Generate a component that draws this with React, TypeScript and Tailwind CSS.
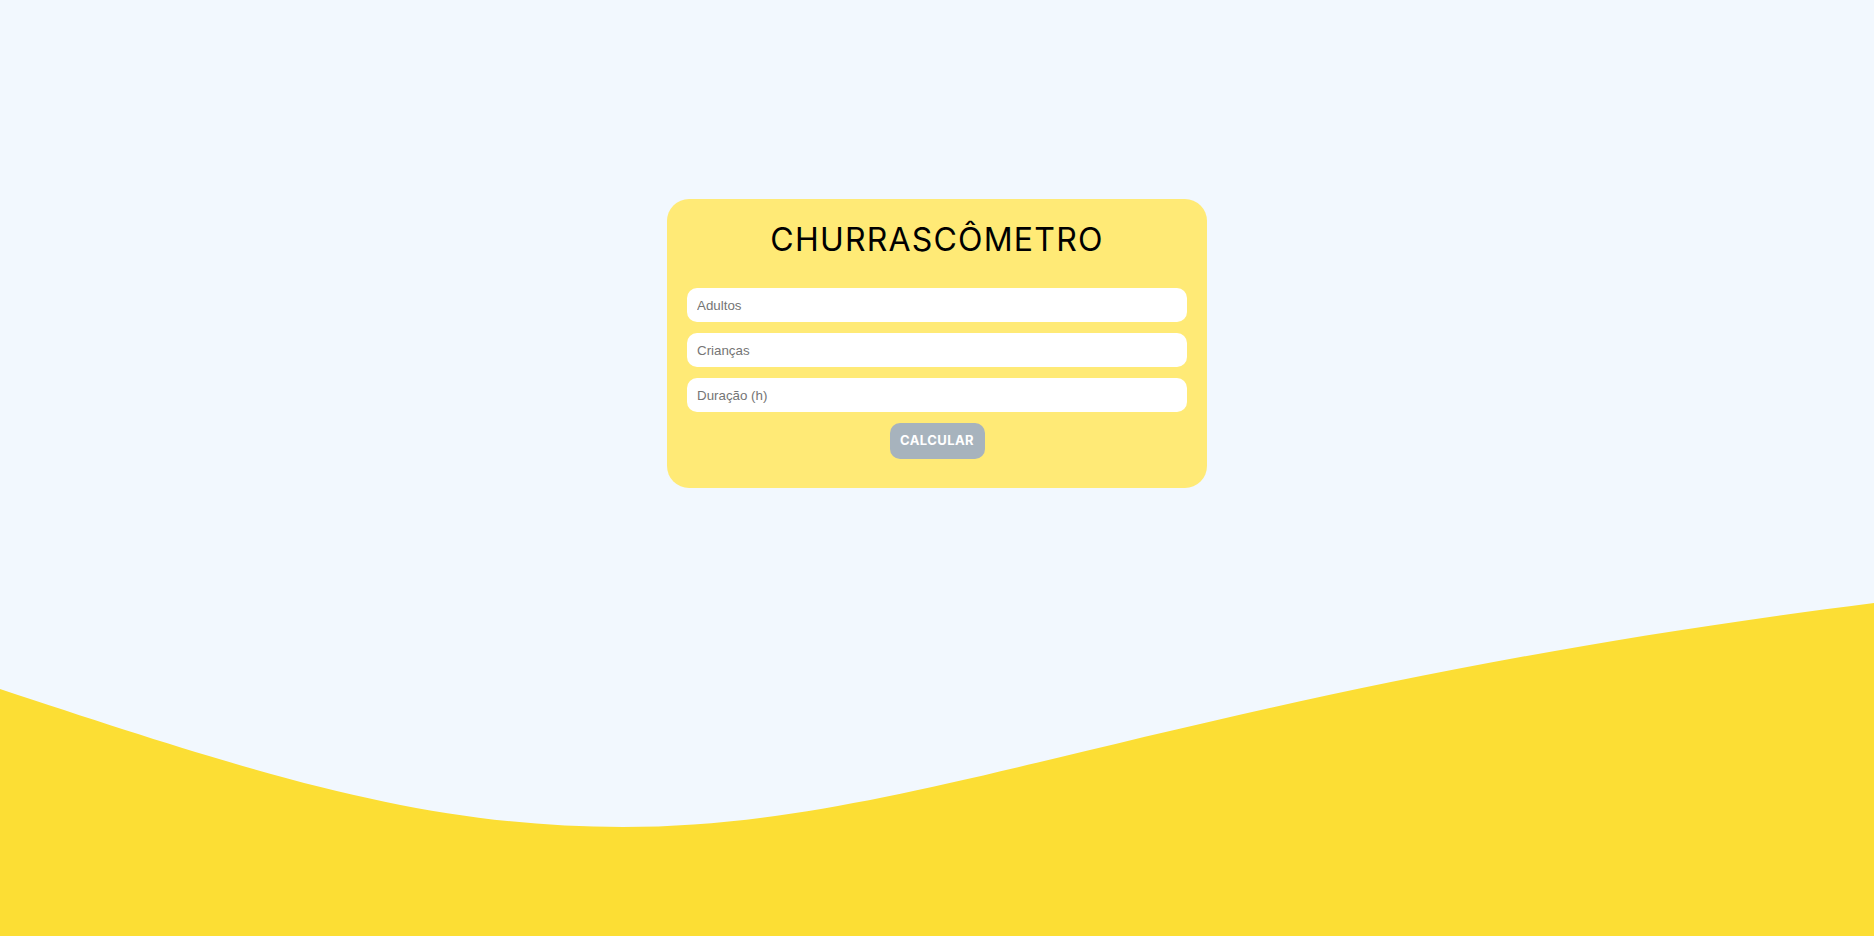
import React from 'react';

// wave edge: two cubic curves, coordinates in page px with the svg top at y=600
const waveD =
  'M0,89C260,175,423,227,623,227C923,227,1174,91,1874,3L1874,336L0,336Z';

function Field({ placeholder }: { placeholder: string }) {
  return (
    <input
      type="number"
      placeholder={placeholder}
      className="h-[34px] w-full rounded-[10px] bg-white px-[10px] text-[13.33px] text-[#333] placeholder:text-[#757575] outline-none"
      style={{ fontFamily: '"Liberation Sans", Arial, sans-serif' }}
    />
  );
}

export default function App() {
  return (
    <div className="flex h-screen w-full flex-col overflow-hidden bg-[#f2f8fe]">
      <div className="flex justify-center pt-[199px]">
        {/* calculator card */}
        <div className="flex w-[540px] flex-col items-center rounded-[22px] bg-[#ffea76] px-5 pt-[21px] pb-[29px]">
          <h1 className="text-[32px] leading-[40px] font-normal tracking-[1.2px] text-black font-['Inter',sans-serif]">
            CHURRASCÔMETRO
          </h1>
          <div className="mt-[28px] flex w-full flex-col gap-[11px]">
            <Field placeholder="Adultos" />
            <Field placeholder="Crianças" />
            <Field placeholder="Duração (h)" />
          </div>
          <button className="mt-[11px] h-9 w-[95px] rounded-[10px] bg-[#a7b3bd] text-[13px] font-bold tracking-[0.4px] text-white font-['Inter',sans-serif]">
            CALCULAR
          </button>
        </div>
      </div>

      <div className="flex-1" />

      {/* bottom wave */}
      <svg viewBox="0 0 1874 336" className="block h-[336px] w-full shrink-0" preserveAspectRatio="none">
        <path d={waveD} fill="#fcde34" />
      </svg>
    </div>
  );
}
